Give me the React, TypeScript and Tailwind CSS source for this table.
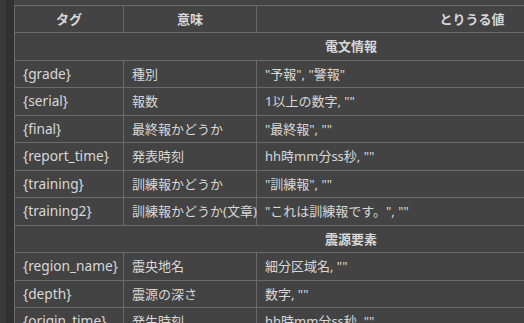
import React from 'react';

type Row = { tag: string; meaning: string; values: string } | { section: string };

const rows: Row[] = [
  { section: '電文情報' },
  { tag: '{grade}', meaning: '種別', values: '"予報", "警報"' },
  { tag: '{serial}', meaning: '報数', values: '1以上の数字, ""' },
  { tag: '{final}', meaning: '最終報かどうか', values: '"最終報", ""' },
  { tag: '{report_time}', meaning: '発表時刻', values: 'hh時mm分ss秒, ""' },
  { tag: '{training}', meaning: '訓練報かどうか', values: '"訓練報", ""' },
  { tag: '{training2}', meaning: '訓練報かどうか(文章)', values: '"これは訓練報です。", ""' },
  { section: '震源要素' },
  { tag: '{region_name}', meaning: '震央地名', values: '細分区域名, ""' },
  { tag: '{depth}', meaning: '震源の深さ', values: '数字, ""' },
  { tag: '{origin_time}', meaning: '発生時刻', values: 'hh時mm分ss秒, ""' },
];

const cell = 'border border-[#6b6b6b] px-2 py-1 leading-[18.45px] whitespace-nowrap';

export default function App() {
  return (
    <div
      className="h-[323px] w-[524px] overflow-hidden bg-[#434343] flex text-[13px] text-[#d8d8d8]"
      style={{ fontFamily: '"Noto Sans", "Noto Sans CJK JP", sans-serif' }}
    >
      <div className="w-[6px] shrink-0 bg-[#3a3a3a]" />
      <div className="w-[8px] shrink-0 bg-[#313131]" />
      <div className="pt-[5px] shrink-0">
        <table className="border-collapse w-[674px] table-fixed">
          <colgroup>
            <col className="w-[109px]" />
            <col className="w-[133px]" />
            <col />
          </colgroup>
          <thead>
            <tr>
              <th className={`${cell} font-bold text-center`}>タグ</th>
              <th className={`${cell} font-bold text-center`}>意味</th>
              <th className={`${cell} font-bold text-center`}>とりうる値</th>
            </tr>
          </thead>
          <tbody>
            {rows.map((r, i) =>
              'section' in r ? (
                <tr key={i}>
                  <td colSpan={3} className={`${cell} font-bold text-center`}>
                    {r.section}
                  </td>
                </tr>
              ) : (
                <tr key={i}>
                  <td className={`${cell} text-[13.7px]`}>{r.tag}</td>
                  <td className={cell}>{r.meaning}</td>
                  <td className={cell}>{r.values}</td>
                </tr>
              )
            )}
          </tbody>
        </table>
      </div>
    </div>
  );
}
